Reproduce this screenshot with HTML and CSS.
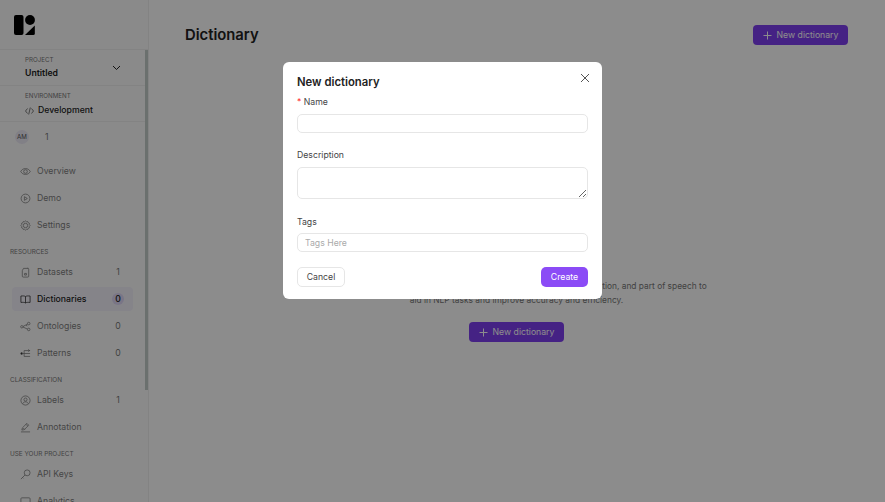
FILE: index.html
```html
<!DOCTYPE html>
<html lang="en">
<head>
    <meta charset="UTF-8">
    <title>Dictionary</title>
    <link rel="stylesheet" href="styles.css">
</head>
<body>

    <div class="app">
        <aside class="sidebar">
            <div class="logo">
                <svg width="21" height="21" viewBox="0 0 21 21"><rect x="0" y="0" width="9.500" height="20" rx="2" fill="#000"/><circle cx="16" cy="5" r="4.900" fill="#000"/><path d="M20.800 10.500V18.500a1.500 1.500 0 0 1-1.500 1.500H11z" fill="#000"/></svg>
            </div>
            <div class="sidebar-scroll">
                <div class="scrollbar"></div>
                <div class="picker picker-project">
                    <div class="picker-label">PROJECT</div>
                    <div class="picker-value">Untitled</div>
                    <svg class="chevron" width="9" height="6" viewBox="0 0 9 6"><path d="M1 1l3.500 3.500L8 1" fill="none" stroke="#222" stroke-width="1"/></svg>
                </div>
                <div class="picker picker-env">
                    <div class="picker-label">ENVIRONMENT</div>
                    <div class="picker-env-row">
                        <svg width="9" height="8" viewBox="0 0 9 8"><path d="M2.500 1.500L.5 4l2 2.500M6.500 1.500L8.500 4l-2 2.500M5.300 .5L3.700 7.500" fill="none" stroke="#444" stroke-width=".7"/></svg>
                        <span class="picker-env-name">Development</span>
                    </div>
                </div>
                <div class="members">
                    <span class="avatar">AM</span>
                    <span class="members-count">1</span>
                </div>

                <nav class="nav">
                    <a class="nav-item">
                        <svg class="nav-icon" viewBox="0 0 12 12"><path d="M.8 6C2 3.800 3.800 2.800 6 2.800S10 3.800 11.200 6C10 8.200 8.200 9.200 6 9.200S2 8.200.8 6z"/><circle cx="6" cy="6" r="2"/></svg>
                        <span class="nav-name">Overview</span>
                    </a>
                    <a class="nav-item">
                        <svg class="nav-icon" viewBox="0 0 12 12"><circle cx="6" cy="6" r="4.800"/><path d="M4.800 4v4L8 6z"/></svg>
                        <span class="nav-name">Demo</span>
                    </a>
                    <a class="nav-item">
                        <svg class="nav-icon" viewBox="0 0 12 12"><path d="M6 1l1 .9 1.400-.2.6 1.300 1.300.6-.2 1.400L11 6l-.9 1 .2 1.400-1.300.6-.6 1.300-1.400-.2L6 11l-1-.9-1.400.2-.6-1.300-1.300-.6.2-1.400L1 6l.9-1-.2-1.400 1.300-.6.6-1.300 1.400.2z"/><circle cx="6" cy="6" r="2.400"/></svg>
                        <span class="nav-name">Settings</span>
                    </a>

                    <div class="nav-section">RESOURCES</div>
                    <a class="nav-item">
                        <svg class="nav-icon" viewBox="0 0 12 12"><path d="M3.800 1.500H8.500a1 1 0 0 1 1 1v7.500a1 1 0 0 1-1 1h-5a1 1 0 0 1-1-1V4z"/><path d="M8.500 .8v1M5 7h2v1.800H5z"/></svg>
                        <span class="nav-name">Datasets</span>
                        <span class="nav-count">1</span>
                    </a>
                    <a class="nav-item nav-item-active">
                        <svg class="nav-icon" viewBox="0 0 12 12"><path d="M6 2.800C5 2 3 2 1 2.200v7c2 -.2 4-.2 5 .6 1-.8 3-.8 5-.6v-7C9 2 7 2 6 2.800zM6 2.800v7"/></svg>
                        <span class="nav-name">Dictionaries</span>
                        <span class="nav-count nav-count-badge">0</span>
                    </a>
                    <a class="nav-item">
                        <svg class="nav-icon" viewBox="0 0 12 12"><circle cx="2" cy="6.300" r="1.300"/><circle cx="9.500" cy="2.800" r="1.400"/><circle cx="9.500" cy="9.200" r="1.400"/><path d="M3.300 6l4.800-2.600M3.300 6.600l4.800 2.200M6.500 4.800l1.500 .6"/></svg>
                        <span class="nav-name">Ontologies</span>
                        <span class="nav-count">0</span>
                    </a>
                    <a class="nav-item">
                        <svg class="nav-icon" viewBox="0 0 12 12"><path d="M3 6h8M4.500 2.800H11M4.500 9.200H11M4.500 2.800v6.400M9 1.500l1.500 1.300L9 4"/><circle cx="1.800" cy="6" r="1" fill="#222"/></svg>
                        <span class="nav-name">Patterns</span>
                        <span class="nav-count">0</span>
                    </a>

                    <div class="nav-section">CLASSIFICATION</div>
                    <a class="nav-item">
                        <svg class="nav-icon" viewBox="0 0 12 12"><circle cx="6" cy="6" r="5"/><circle cx="6" cy="5" r="1.700"/><path d="M3 9.500C3.500 8 4.500 7.500 6 7.500S8.500 8 9 9.500"/></svg>
                        <span class="nav-name">Labels</span>
                        <span class="nav-count">1</span>
                    </a>
                    <a class="nav-item">
                        <svg class="nav-icon" viewBox="0 0 12 12"><path d="M1 10.800h10M2 8.800l.6-2.400L7.500 1.500l2 2-4.900 4.900zM6.500 2.500l2 2M3.500 6.500l1.800 1.800"/></svg>
                        <span class="nav-name">Annotation</span>
                    </a>

                    <div class="nav-section">USE YOUR PROJECT</div>
                    <a class="nav-item">
                        <svg class="nav-icon" viewBox="0 0 12 12"><circle cx="7.800" cy="4.200" r="3.200"/><path d="M5.500 6.500L1 11v-.1M2.800 9.200l1 1"/></svg>
                        <span class="nav-name">API Keys</span>
                    </a>
                    <a class="nav-item">
                        <svg class="nav-icon" viewBox="0 0 12 12"><rect x="1" y="2" width="10" height="8" rx="1"/></svg>
                        <span class="nav-name">Analytics</span>
                    </a>
                </nav>
            </div>
        </aside>

        <main class="main">
            <header class="main-header">
                <h1>Dictionary</h1>
                <button class="btn-primary">
                    <svg width="9" height="9" viewBox="0 0 9 9"><path d="M4.500 .5v8M.5 4.500h8" stroke="#fff" stroke-width="1" fill="none"/></svg>
                    New dictionary
                </button>
            </header>
            <div class="empty">
                <p>A dictionary holds a list of words along with their definition, pronunciation, and part of speech to aid in NLP tasks and improve accuracy and efficiency.</p>
                <button class="btn-primary">
                    <svg width="9" height="9" viewBox="0 0 9 9"><path d="M4.500 .5v8M.5 4.500h8" stroke="#fff" stroke-width="1" fill="none"/></svg>
                    New dictionary
                </button>
            </div>
        </main>
    </div>

    <div class="overlay"></div>

    <div class="modal">
        <svg class="modal-close" width="10" height="10" viewBox="0 0 10 10"><path d="M1 1l8 8M9 1l-8 8" stroke="#555" stroke-width="1" fill="none"/></svg>
        <h2>New dictionary</h2>
        <div class="field field-name">
            <label><span class="required">*</span> Name</label>
            <input type="text">
        </div>
        <div class="field field-desc">
            <label>Description</label>
            <textarea></textarea>
        </div>
        <div class="field field-tags">
            <label>Tags</label>
            <input type="text" placeholder="Tags Here">
        </div>
        <div class="modal-actions">
            <button class="btn-cancel">Cancel</button>
            <button class="btn-create">Create</button>
        </div>
    </div>

</body>
</html>
```

FILE: styles.css
```css
* {
    box-sizing: border-box;
}

html, body {
    height: 100%;
}

body {
    margin: 0;
    overflow: hidden;
    font-family: Inter, "Liberation Sans", sans-serif;
    font-size: 8.700px;
    color: #222;
    background-color: #ffffff;
}

.app {
    display: flex;
    height: 502px;
    overflow: hidden;
}

.sidebar {
    width: 149px;
    flex-shrink: 0;
    border-right: 1px solid #efefef;
    background-color: #fcfcfc;
    display: flex;
    flex-direction: column;
}

.logo {
    height: 50px;
    padding: 15px 0 0 14px;
    border-bottom: 1px solid #efefef;
    flex-shrink: 0;
}

.sidebar-scroll {
    position: relative;
    flex: 1;
    overflow: hidden;
}

.scrollbar {
    position: absolute;
    top: 0;
    right: 0;
    width: 3px;
    height: 340px;
    background-color: #c4ccc8;
}

.picker {
    height: 36px;
    padding-left: 25px;
    border-bottom: 1px solid #efefef;
    margin-right: 3px;
    position: relative;
}

.picker-label {
    padding-top: 5px;
    font-size: 6.200px;
    line-height: 9px;
    color: #777;
}

.picker-value {
    margin-top: 3px;
    font-size: 8.700px;
    line-height: 13px;
    font-weight: 600;
}

.chevron {
    position: absolute;
    right: 24px;
    top: 15px;
}

.picker-env-row {
    display: flex;
    align-items: center;
    gap: 4px;
    margin-top: 4px;
}

.picker-env-name {
    font-size: 8.700px;
    line-height: 13px;
    font-weight: 500;
}

.members {
    display: flex;
    align-items: center;
    height: 30px;
    padding-left: 15px;
}

.avatar {
    width: 14px;
    height: 14px;
    border-radius: 50%;
    background-color: #ece9f5;
    font-size: 6.200px;
    line-height: 14px;
    text-align: center;
    color: #555;
}

.members-count {
    margin-left: 16px;
    color: #777;
}

.nav {
    padding-top: 7px;
}

.nav-item {
    display: flex;
    align-items: center;
    height: 24px;
    margin: 0 15px 3px 12px;
    padding: 0 9px 0 8px;
    border-radius: 4px;
    color: #808080;
}

.nav-item-active {
    background-color: #f2f0fa;
    color: #222;
    font-weight: 500;
}

.nav-icon {
    width: 11px;
    height: 11px;
    fill: none;
    stroke: #777;
    stroke-width: .8;
    margin-right: 6px;
    flex-shrink: 0;
}

.nav-item-active .nav-icon {
    stroke: #222;
}

.nav-name {
    flex: 1;
}

.nav-count {
    width: 12px;
    height: 12px;
    line-height: 12px;
    text-align: center;
    color: #777;
}

.nav-count-badge {
    border-radius: 50%;
    background-color: #ddd6f5;
    color: #222;
}

.nav-section {
    padding-left: 10px;
    font-size: 6.400px;
    line-height: 9px;
    margin: 11px 0 3px;
    color: #777;
}

.main {
    flex: 1;
    padding-left: 36px;
    padding-right: 37px;
}

.main-header {
    display: flex;
    justify-content: space-between;
    align-items: center;
    height: 70px;
}

h1 {
    margin: 0;
    font-size: 14.800px;
    font-weight: 600;
    color: #222;
}

.btn-primary {
    display: flex;
    align-items: center;
    justify-content: center;
    gap: 5px;
    width: 95px;
    height: 20px;
    border: none;
    border-radius: 4px;
    font-family: inherit;
    font-size: 8.700px;
    white-space: nowrap;
    color: #fff;
    background-color: #7f3ff0;
}

.empty {
    display: flex;
    flex-direction: column;
    align-items: center;
    padding-top: 209px;
}

.empty p {
    margin: 0 0 15px;
    width: 392px;
    font-size: 8.400px;
    line-height: 14px;
    text-align: center;
    color: #777;
}

.overlay {
    position: fixed;
    inset: 0;
    background-color: rgba(0, 0, 0, .45);
}

.modal {
    position: fixed;
    left: 283px;
    top: 62px;
    width: 319px;
    height: 237px;
    padding: 14px;
    border-radius: 6px;
    background-color: #fff;
}

.modal-close {
    position: absolute;
    right: 12px;
    top: 11px;
}

h2 {
    margin: 0;
    font-size: 11.300px;
    line-height: 13px;
    font-weight: 600;
    color: #222;
}

.field label {
    display: block;
    font-size: 8.700px;
    line-height: 12px;
    color: #444;
}

.field-name {
    margin-top: 7px;
}

.field-desc {
    margin-top: 16px;
}

.field-tags {
    margin-top: 17px;
}

.required {
    color: #f33;
}

.field input,
.field textarea {
    display: block;
    width: 100%;
    margin-top: 6px;
    padding: 0 7px;
    border: 1px solid #e6e6e6;
    border-radius: 5px;
    font-family: inherit;
    font-size: 8.700px;
    outline: none;
}

.field input {
    height: 19px;
}

.field textarea {
    height: 32px;
}

.field-tags input {
    margin-top: 5px;
}

.field input::placeholder {
    color: #aaa;
}

.modal-actions {
    display: flex;
    justify-content: space-between;
    margin-top: 15px;
}

.btn-cancel,
.btn-create {
    height: 20px;
    border-radius: 5px;
    font-family: inherit;
    font-size: 8.700px;
}

.btn-cancel {
    width: 48px;
    border: 1px solid #e6e6e6;
    background-color: #fff;
    color: #444;
}

.btn-create {
    width: 47px;
    border: none;
    background-color: #8b4bf6;
    color: #fff;
}
```
